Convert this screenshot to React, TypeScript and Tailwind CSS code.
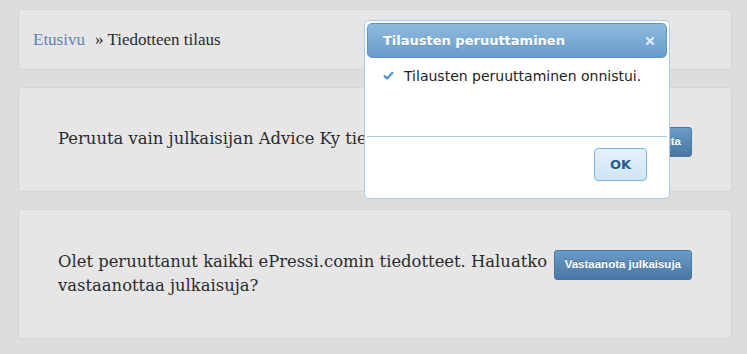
import { X } from 'lucide-react'

const serif = "font-['DejaVu_Serif','Liberation_Serif',serif]"
const sans = "font-['DejaVu_Sans','Noto_Sans',sans-serif]"

function ActionButton({ label }: { label: string }) {
  return (
    <button className="shrink-0 h-[30px] px-[10px] rounded-[3px] border border-[#4a76a2] bg-gradient-to-b from-[#6a9bc9] to-[#4a77a3] text-white text-[11.5px] font-bold font-['Liberation_Sans',Arial,sans-serif] [text-shadow:0_-1px_0_rgba(0,0,0,0.3)]">
      {label}
    </button>
  )
}

function Dialog() {
  return (
    <div className={`absolute left-[364px] top-[20px] w-[306px] h-[179px] rounded-[5px] border border-[#a9cce9] bg-white p-[2px] flex flex-col ${sans}`}>
      <div className="h-[35px] shrink-0 rounded-[5px] border border-[#5d98cd] bg-gradient-to-b from-[#8fbade] to-[#679cca] flex items-center justify-between pl-[15px] pr-[10px]">
        <span className="text-white text-[13px] font-bold [text-shadow:0_1px_0_rgba(0,0,0,0.12)]">Tilausten peruuttaminen</span>
        <X size={12} strokeWidth={4.5} className="text-[#dde9f5]" />
      </div>

      <div className="flex-1 flex items-start pl-[16px] pt-[9px]">
        <svg width="11" height="9" viewBox="0 0 11 9" className="mt-[4px] shrink-0">
          <path d="M1 4.6 L4 7.4 L10 1.2" fill="none" stroke="#4a90d5" strokeWidth="2.2" strokeLinejoin="round" />
        </svg>
        <span className="ml-[10px] text-[14px] leading-[18px] text-[#1e1e1e]">Tilausten peruuttaminen onnistui.</span>
      </div>

      <div className="h-[60px] shrink-0 border-t border-[#a6c9e6] flex items-start justify-end pr-[20px] pt-[11px]">
        <button className="w-[53px] h-[33px] rounded-[4px] border border-[#79b7e7] bg-gradient-to-b from-[#e6f2fc] to-[#cfe4f6] text-[#245e8f] text-[13px] font-bold">
          OK
        </button>
      </div>
    </div>
  )
}

export default function App() {
  return (
    <div className={`relative w-[747px] h-[354px] bg-[#dddddd] pt-[9px] pl-[18px] pr-[15px] text-[#2b2b2b] ${serif}`}>
      <div className="h-[61px] rounded-[4px] border border-[#d5d5d5] bg-[#e6e6e6] flex items-center pl-[14px] text-[17px] font-['Liberation_Serif','Times_New_Roman',serif]">
        <a className="text-[#5b84b6]">Etusivu</a>
        <span className="ml-[10px]">» Tiedotteen tilaus</span>
      </div>

      <div className="mt-[17px] h-[105px] rounded-[4px] border border-[#d5d5d5] bg-[#e6e6e6] pt-[39px] px-[39px]">
        <div className="flex items-start gap-[5px]">
          <p className="flex-1 text-[16.4px] leading-[24px]">Peruuta vain julkaisijan Advice Ky tiedotteet</p>
          <ActionButton label="Peruuta" />
        </div>
      </div>

      <div className="mt-[17px] h-[130px] rounded-[4px] border border-[#d5d5d5] bg-[#e6e6e6] pt-[40px] px-[39px]">
        <div className="flex items-start gap-[5px]">
          <p className="flex-1 text-[16.4px] leading-[24px]">
            Olet peruuttanut kaikki ePressi.comin tiedotteet. Haluatko vastaanottaa julkaisuja?
          </p>
          <ActionButton label="Vastaanota julkaisuja" />
        </div>
      </div>

      <Dialog />
    </div>
  )
}
